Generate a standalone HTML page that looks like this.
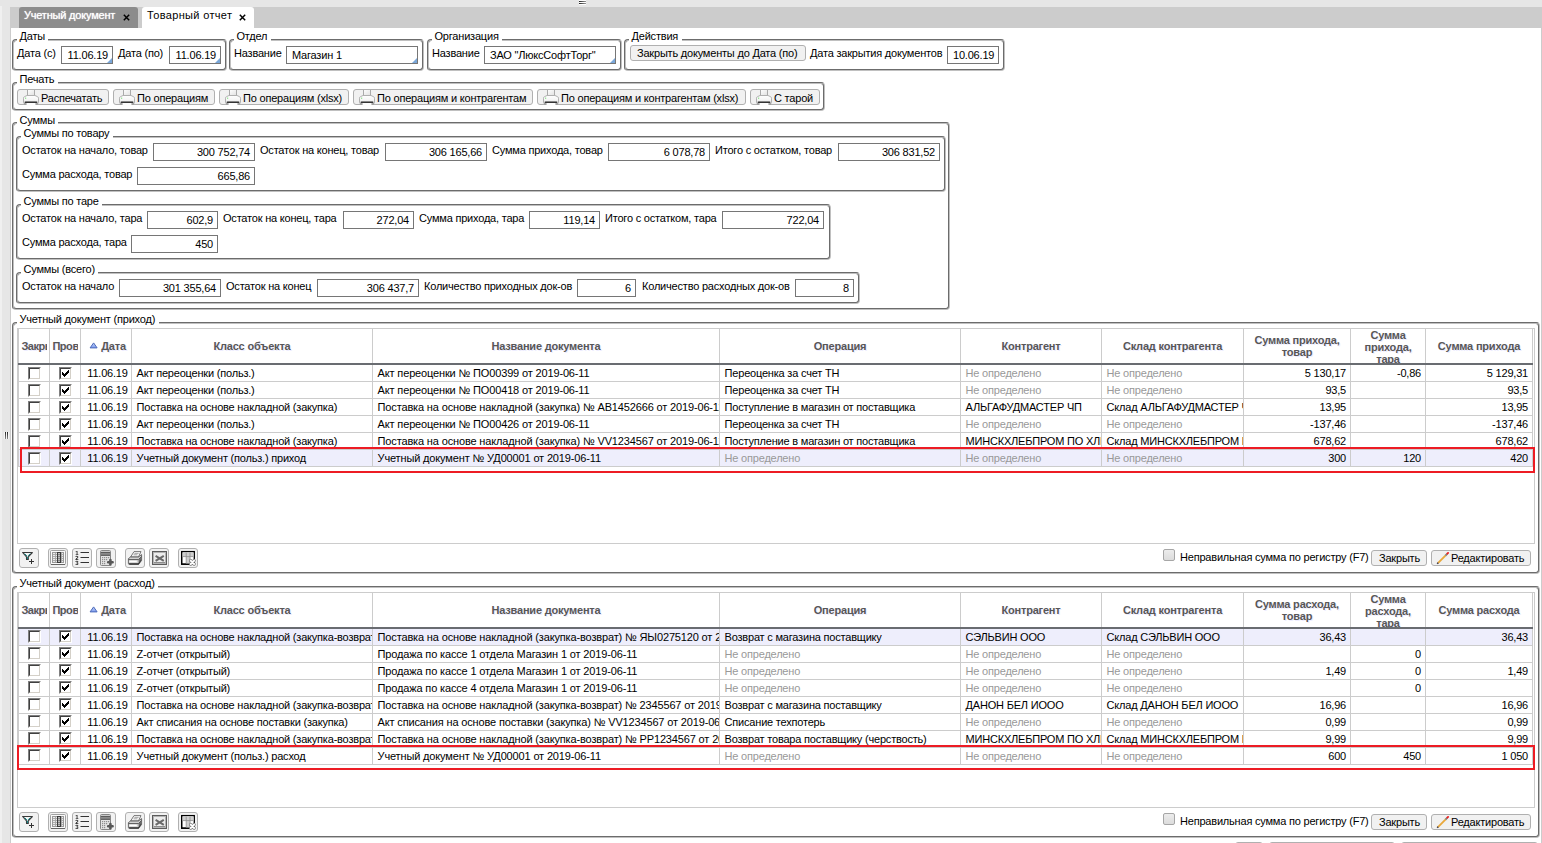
<!DOCTYPE html><html lang="ru"><head><meta charset="utf-8"><title>Товарный отчет</title><style>
*{box-sizing:border-box;margin:0;padding:0}
html,body{width:1542px;height:843px;overflow:hidden}
body{position:relative;background:#e6e6e6;font:11px/13px "Liberation Sans",sans-serif;color:#000;letter-spacing:-0.2px}
div,span,svg{position:absolute}
.t{white-space:nowrap;height:13px;line-height:13px}
.fs{border:2px groove #c0c0c0;border-radius:4px}
.lg{background:#fff;padding:0 3.5px 0 2.5px;height:13px;line-height:13px;white-space:nowrap}
.in{border:1px solid #767676;background:#fff;height:18px;line-height:17px;white-space:nowrap;overflow:hidden;padding:0 4px 0 5px}
.in.r{text-align:right}
.tri{width:0;height:0;border-left:5px solid transparent;border-bottom:5px solid #7aa7d9;right:0;bottom:0}
.btn{border:1px solid #b0b0b0;border-radius:3px;background:#f1f1f1;height:16px;line-height:14px;white-space:nowrap}
.tb{border:1px solid #b0b0b0;border-radius:3px;background:#f2f2f2;width:20px;height:20px;overflow:hidden}
.grid{border:1px solid #ccc;background:#fff;overflow:hidden}
.hc{top:0;height:34px;border-left:1px solid #ccc;font-weight:bold;color:#585757;text-shadow:1px 1px 0 #ededff;letter-spacing:-0.2px;overflow:hidden;display:flex;align-items:center;justify-content:center;text-align:center;line-height:12px;padding:0 3px}
.hc>span{position:static}
.hl{left:0;top:34px;height:2px;background:#696c71}
.row{left:0;height:17px;border-bottom:1px solid #ccc}
.row.sel{background:#eeeefc}
.c{top:0;height:16px;line-height:16px;border-left:1px solid #ccc;white-space:nowrap;overflow:hidden;padding:0 4px 0 4.6px}
.c.r{text-align:right}
.c.n{color:#999}
.cb{width:13px;height:13px;top:2px;background:#fff;border:1px solid;border-color:#808080 #fff #fff #808080}
.cb:before{box-sizing:border-box;content:"";position:absolute;left:0;top:0;width:11px;height:11px;border:1px solid;border-color:#404040 #d4d0c8 #d4d0c8 #404040}
.red{border:2px solid #ed1c24}
</style></head><body>
<div style="left:0;top:6px;width:2px;height:837px;background:#f0f0f0"></div>
<div style="left:10px;top:7px;width:1532px;height:21px;background:#ccc"></div>
<div style="left:10px;top:28px;width:1532px;height:815px;background:#ccc"></div>
<div style="left:11px;top:28px;width:1530px;height:815px;background:#fff"></div>
<div style="left:579px;top:0;width:7px;height:5px;background:#fff"></div>
<div style="left:579px;top:1px;width:7px;height:1px;background:linear-gradient(90deg,#222,#999)"></div>
<div style="left:579px;top:3px;width:7px;height:1px;background:linear-gradient(90deg,#222,#999)"></div>
<div style="left:4px;top:432px;width:5px;height:7px;background:#f6f6f6"></div>
<div style="left:5px;top:432px;width:1px;height:7px;background:linear-gradient(#222,#888)"></div>
<div style="left:7px;top:432px;width:1px;height:7px;background:linear-gradient(#222,#888)"></div>
<div style="left:19px;top:7px;width:119px;height:21px;background:#8c8c8c;border-radius:3px 3px 0 0"></div>
<span class="t " style="left:24px;top:9px;color:#fff;text-shadow:0 0 1px #fff;font-size:11px">Учетный документ</span>
<div style="left:142px;top:7px;width:112px;height:21px;background:#fff;border-radius:3px 3px 0 0"></div>
<span class="t " style="left:147px;top:9px;letter-spacing:.34px">Товарный отчет</span>
<svg width="7" height="7" viewBox="0 0 7 7" style="left:123px;top:14px"><path d="M.8 .8 L6.2 6.2 M6.2 .8 L.8 6.2" stroke="#000" stroke-width="1.45" fill="none"/></svg>
<svg width="7" height="7" viewBox="0 0 7 7" style="left:239px;top:14px"><path d="M.8 .8 L6.2 6.2 M6.2 .8 L.8 6.2" stroke="#000" stroke-width="1.45" fill="none"/></svg>
<div class="fs" style="left:12px;top:39px;width:215px;height:32px"></div>
<span class="lg" style="left:17px;top:30px">Даты</span>
<span class="t " style="left:17px;top:47px;">Дата (с)</span>
<div class="in r" style="left:61px;top:46px;width:52px">11.06.19<div class="tri"></div></div>
<span class="t " style="left:118px;top:47px;">Дата (по)</span>
<div class="in r" style="left:169px;top:46px;width:52px">11.06.19<div class="tri"></div></div>
<div class="fs" style="left:229px;top:39px;width:195px;height:32px"></div>
<span class="lg" style="left:234px;top:30px">Отдел</span>
<span class="t " style="left:234px;top:47px;">Название</span>
<div class="in" style="left:286px;top:46px;width:132px">Магазин 1<div class="tri"></div></div>
<div class="fs" style="left:427px;top:39px;width:195px;height:32px"></div>
<span class="lg" style="left:432px;top:30px">Организация</span>
<span class="t " style="left:432px;top:47px;">Название</span>
<div class="in" style="left:484px;top:46px;width:132px">ЗАО "ЛюксСофтТорг"<div class="tri"></div></div>
<div class="fs" style="left:624px;top:39px;width:381px;height:32px"></div>
<span class="lg" style="left:629px;top:30px">Действия</span>
<div class="btn" style="left:630px;top:45px;width:176px;height:16px"><span class="t" style="left:6px;top:1px">Закрыть документы до Дата (по)</span></div>
<span class="t " style="left:810px;top:47px;">Дата закрытия документов</span>
<div class="in r" style="left:947px;top:46px;width:52px">10.06.19</div>
<div class="fs" style="left:12px;top:82px;width:813px;height:29px"></div>
<span class="lg" style="left:17px;top:73px">Печать</span>
<div class="btn" style="left:17px;top:89px;width:92px;height:16px"><svg width="16" height="17" viewBox="0 0 16 17" style="left:5px;top:-1px"><defs><linearGradient id="pg1" x1="0" y1="0" x2="0" y2="1"><stop offset="0" stop-color="#fff"/><stop offset=".6" stop-color="#f4f4f4"/><stop offset="1" stop-color="#dcdcdc"/></linearGradient><linearGradient id="pb1" x1="0" y1="0" x2="0" y2="1"><stop offset="0" stop-color="#b0b0b0"/><stop offset="1" stop-color="#0c0c0c"/></linearGradient><linearGradient id="pp1" x1="0" y1="0" x2="1" y2="1"><stop offset="0" stop-color="#fff"/><stop offset="1" stop-color="#dedede"/></linearGradient></defs><rect x="4" y="1" width="8" height="6" fill="url(#pp1)"/><path d="M4.5 1 V6.5 M11.5 1 V6.5" stroke="#aaa" fill="none"/><path d="M.5 13.5 V9.2 Q.5 8 1.6 7.6 L4 6.5 H12 L14.4 7.6 Q15.5 8 15.5 9.2 V13.5 Q15.5 14.5 14.5 14.5 H1.5 Q.5 14.5 .5 13.5Z" fill="url(#pg1)" stroke="#b0b0b0"/><path d="M2.6 12 H13.4 Q14.3 12 14.3 13 V14 H1.7 V13 Q1.7 12 2.6 12Z" fill="url(#pb1)"/><rect x="1" y="14" width="2.6" height="2" fill="#a2a2a2"/><rect x="12.4" y="14" width="2.6" height="2" fill="#a2a2a2"/><rect x="3.6" y="14" width="8.8" height="2.6" fill="#fdfdfd"/><rect x="2" y="8.6" width="1.2" height="1.2" fill="#86e086"/></svg><span class="t" style="left:23px;top:2px">Распечатать</span></div>
<div class="btn" style="left:113px;top:89px;width:102px;height:16px"><svg width="16" height="17" viewBox="0 0 16 17" style="left:5px;top:-1px"><defs><linearGradient id="pg2" x1="0" y1="0" x2="0" y2="1"><stop offset="0" stop-color="#fff"/><stop offset=".6" stop-color="#f4f4f4"/><stop offset="1" stop-color="#dcdcdc"/></linearGradient><linearGradient id="pb2" x1="0" y1="0" x2="0" y2="1"><stop offset="0" stop-color="#b0b0b0"/><stop offset="1" stop-color="#0c0c0c"/></linearGradient><linearGradient id="pp2" x1="0" y1="0" x2="1" y2="1"><stop offset="0" stop-color="#fff"/><stop offset="1" stop-color="#dedede"/></linearGradient></defs><rect x="4" y="1" width="8" height="6" fill="url(#pp2)"/><path d="M4.5 1 V6.5 M11.5 1 V6.5" stroke="#aaa" fill="none"/><path d="M.5 13.5 V9.2 Q.5 8 1.6 7.6 L4 6.5 H12 L14.4 7.6 Q15.5 8 15.5 9.2 V13.5 Q15.5 14.5 14.5 14.5 H1.5 Q.5 14.5 .5 13.5Z" fill="url(#pg2)" stroke="#b0b0b0"/><path d="M2.6 12 H13.4 Q14.3 12 14.3 13 V14 H1.7 V13 Q1.7 12 2.6 12Z" fill="url(#pb2)"/><rect x="1" y="14" width="2.6" height="2" fill="#a2a2a2"/><rect x="12.4" y="14" width="2.6" height="2" fill="#a2a2a2"/><rect x="3.6" y="14" width="8.8" height="2.6" fill="#fdfdfd"/><rect x="2" y="8.6" width="1.2" height="1.2" fill="#86e086"/></svg><span class="t" style="left:23px;top:2px">По операциям</span></div>
<div class="btn" style="left:219px;top:89px;width:130px;height:16px"><svg width="16" height="17" viewBox="0 0 16 17" style="left:5px;top:-1px"><defs><linearGradient id="pg3" x1="0" y1="0" x2="0" y2="1"><stop offset="0" stop-color="#fff"/><stop offset=".6" stop-color="#f4f4f4"/><stop offset="1" stop-color="#dcdcdc"/></linearGradient><linearGradient id="pb3" x1="0" y1="0" x2="0" y2="1"><stop offset="0" stop-color="#b0b0b0"/><stop offset="1" stop-color="#0c0c0c"/></linearGradient><linearGradient id="pp3" x1="0" y1="0" x2="1" y2="1"><stop offset="0" stop-color="#fff"/><stop offset="1" stop-color="#dedede"/></linearGradient></defs><rect x="4" y="1" width="8" height="6" fill="url(#pp3)"/><path d="M4.5 1 V6.5 M11.5 1 V6.5" stroke="#aaa" fill="none"/><path d="M.5 13.5 V9.2 Q.5 8 1.6 7.6 L4 6.5 H12 L14.4 7.6 Q15.5 8 15.5 9.2 V13.5 Q15.5 14.5 14.5 14.5 H1.5 Q.5 14.5 .5 13.5Z" fill="url(#pg3)" stroke="#b0b0b0"/><path d="M2.6 12 H13.4 Q14.3 12 14.3 13 V14 H1.7 V13 Q1.7 12 2.6 12Z" fill="url(#pb3)"/><rect x="1" y="14" width="2.6" height="2" fill="#a2a2a2"/><rect x="12.4" y="14" width="2.6" height="2" fill="#a2a2a2"/><rect x="3.6" y="14" width="8.8" height="2.6" fill="#fdfdfd"/><rect x="2" y="8.6" width="1.2" height="1.2" fill="#86e086"/></svg><span class="t" style="left:23px;top:2px">По операциям (xlsx)</span></div>
<div class="btn" style="left:353px;top:89px;width:180px;height:16px"><svg width="16" height="17" viewBox="0 0 16 17" style="left:5px;top:-1px"><defs><linearGradient id="pg4" x1="0" y1="0" x2="0" y2="1"><stop offset="0" stop-color="#fff"/><stop offset=".6" stop-color="#f4f4f4"/><stop offset="1" stop-color="#dcdcdc"/></linearGradient><linearGradient id="pb4" x1="0" y1="0" x2="0" y2="1"><stop offset="0" stop-color="#b0b0b0"/><stop offset="1" stop-color="#0c0c0c"/></linearGradient><linearGradient id="pp4" x1="0" y1="0" x2="1" y2="1"><stop offset="0" stop-color="#fff"/><stop offset="1" stop-color="#dedede"/></linearGradient></defs><rect x="4" y="1" width="8" height="6" fill="url(#pp4)"/><path d="M4.5 1 V6.5 M11.5 1 V6.5" stroke="#aaa" fill="none"/><path d="M.5 13.5 V9.2 Q.5 8 1.6 7.6 L4 6.5 H12 L14.4 7.6 Q15.5 8 15.5 9.2 V13.5 Q15.5 14.5 14.5 14.5 H1.5 Q.5 14.5 .5 13.5Z" fill="url(#pg4)" stroke="#b0b0b0"/><path d="M2.6 12 H13.4 Q14.3 12 14.3 13 V14 H1.7 V13 Q1.7 12 2.6 12Z" fill="url(#pb4)"/><rect x="1" y="14" width="2.6" height="2" fill="#a2a2a2"/><rect x="12.4" y="14" width="2.6" height="2" fill="#a2a2a2"/><rect x="3.6" y="14" width="8.8" height="2.6" fill="#fdfdfd"/><rect x="2" y="8.6" width="1.2" height="1.2" fill="#86e086"/></svg><span class="t" style="left:23px;top:2px">По операциям и контрагентам</span></div>
<div class="btn" style="left:537px;top:89px;width:209px;height:16px"><svg width="16" height="17" viewBox="0 0 16 17" style="left:5px;top:-1px"><defs><linearGradient id="pg5" x1="0" y1="0" x2="0" y2="1"><stop offset="0" stop-color="#fff"/><stop offset=".6" stop-color="#f4f4f4"/><stop offset="1" stop-color="#dcdcdc"/></linearGradient><linearGradient id="pb5" x1="0" y1="0" x2="0" y2="1"><stop offset="0" stop-color="#b0b0b0"/><stop offset="1" stop-color="#0c0c0c"/></linearGradient><linearGradient id="pp5" x1="0" y1="0" x2="1" y2="1"><stop offset="0" stop-color="#fff"/><stop offset="1" stop-color="#dedede"/></linearGradient></defs><rect x="4" y="1" width="8" height="6" fill="url(#pp5)"/><path d="M4.5 1 V6.5 M11.5 1 V6.5" stroke="#aaa" fill="none"/><path d="M.5 13.5 V9.2 Q.5 8 1.6 7.6 L4 6.5 H12 L14.4 7.6 Q15.5 8 15.5 9.2 V13.5 Q15.5 14.5 14.5 14.5 H1.5 Q.5 14.5 .5 13.5Z" fill="url(#pg5)" stroke="#b0b0b0"/><path d="M2.6 12 H13.4 Q14.3 12 14.3 13 V14 H1.7 V13 Q1.7 12 2.6 12Z" fill="url(#pb5)"/><rect x="1" y="14" width="2.6" height="2" fill="#a2a2a2"/><rect x="12.4" y="14" width="2.6" height="2" fill="#a2a2a2"/><rect x="3.6" y="14" width="8.8" height="2.6" fill="#fdfdfd"/><rect x="2" y="8.6" width="1.2" height="1.2" fill="#86e086"/></svg><span class="t" style="left:23px;top:2px">По операциям и контрагентам (xlsx)</span></div>
<div class="btn" style="left:750px;top:89px;width:70px;height:16px"><svg width="16" height="17" viewBox="0 0 16 17" style="left:5px;top:-1px"><defs><linearGradient id="pg6" x1="0" y1="0" x2="0" y2="1"><stop offset="0" stop-color="#fff"/><stop offset=".6" stop-color="#f4f4f4"/><stop offset="1" stop-color="#dcdcdc"/></linearGradient><linearGradient id="pb6" x1="0" y1="0" x2="0" y2="1"><stop offset="0" stop-color="#b0b0b0"/><stop offset="1" stop-color="#0c0c0c"/></linearGradient><linearGradient id="pp6" x1="0" y1="0" x2="1" y2="1"><stop offset="0" stop-color="#fff"/><stop offset="1" stop-color="#dedede"/></linearGradient></defs><rect x="4" y="1" width="8" height="6" fill="url(#pp6)"/><path d="M4.5 1 V6.5 M11.5 1 V6.5" stroke="#aaa" fill="none"/><path d="M.5 13.5 V9.2 Q.5 8 1.6 7.6 L4 6.5 H12 L14.4 7.6 Q15.5 8 15.5 9.2 V13.5 Q15.5 14.5 14.5 14.5 H1.5 Q.5 14.5 .5 13.5Z" fill="url(#pg6)" stroke="#b0b0b0"/><path d="M2.6 12 H13.4 Q14.3 12 14.3 13 V14 H1.7 V13 Q1.7 12 2.6 12Z" fill="url(#pb6)"/><rect x="1" y="14" width="2.6" height="2" fill="#a2a2a2"/><rect x="12.4" y="14" width="2.6" height="2" fill="#a2a2a2"/><rect x="3.6" y="14" width="8.8" height="2.6" fill="#fdfdfd"/><rect x="2" y="8.6" width="1.2" height="1.2" fill="#86e086"/></svg><span class="t" style="left:23px;top:2px">С тарой</span></div>
<div class="fs" style="left:12px;top:122px;width:938px;height:188px"></div>
<span class="lg" style="left:17px;top:114px">Суммы</span>
<div class="fs" style="left:16px;top:136px;width:930px;height:56px"></div>
<span class="lg" style="left:21px;top:127px">Суммы по товару</span>
<span class="t " style="left:22px;top:144px;">Остаток на начало, товар</span>
<div class="in r" style="left:153px;top:143px;width:102px">300 752,74</div>
<span class="t " style="left:260px;top:144px;">Остаток на конец, товар</span>
<div class="in r" style="left:385px;top:143px;width:102px">306 165,66</div>
<span class="t " style="left:492px;top:144px;">Сумма прихода, товар</span>
<div class="in r" style="left:608px;top:143px;width:102px">6 078,78</div>
<span class="t " style="left:715px;top:144px;">Итого с остатком, товар</span>
<div class="in r" style="left:838px;top:143px;width:102px">306 831,52</div>
<span class="t " style="left:22px;top:168px;">Сумма расхода, товар</span>
<div class="in r" style="left:137px;top:167px;width:118px">665,86</div>
<div class="fs" style="left:16px;top:204px;width:815px;height:56px"></div>
<span class="lg" style="left:21px;top:195px">Суммы по таре</span>
<span class="t " style="left:22px;top:212px;">Остаток на начало, тара</span>
<div class="in r" style="left:147px;top:211px;width:71px">602,9</div>
<span class="t " style="left:223px;top:212px;">Остаток на конец, тара</span>
<div class="in r" style="left:343px;top:211px;width:71px">272,04</div>
<span class="t " style="left:419px;top:212px;">Сумма прихода, тара</span>
<div class="in r" style="left:529px;top:211px;width:71px">119,14</div>
<span class="t " style="left:605px;top:212px;">Итого с остатком, тара</span>
<div class="in r" style="left:722px;top:211px;width:102px">722,04</div>
<span class="t " style="left:22px;top:236px;">Сумма расхода, тара</span>
<div class="in r" style="left:131px;top:235px;width:87px">450</div>
<div class="fs" style="left:16px;top:272px;width:844px;height:32px"></div>
<span class="lg" style="left:21px;top:263px">Суммы (всего)</span>
<span class="t " style="left:22px;top:280px;">Остаток на начало</span>
<div class="in r" style="left:119px;top:279px;width:102px">301 355,64</div>
<span class="t " style="left:226px;top:280px;">Остаток на конец</span>
<div class="in r" style="left:317px;top:279px;width:102px">306 437,7</div>
<span class="t " style="left:424px;top:280px;">Количество приходных док-ов</span>
<div class="in r" style="left:577px;top:279px;width:59px">6</div>
<span class="t " style="left:642px;top:280px;">Количество расходных док-ов</span>
<div class="in r" style="left:795px;top:279px;width:59px">8</div>
<div class="fs" style="left:12px;top:322px;width:1528px;height:252px"></div>
<span class="lg" style="left:17px;top:313px">Учетный документ (приход)</span>
<div class="grid" style="left:17px;top:328px;width:1518px;height:216px">
<div class="hc" style="left:0px;width:31px;justify-content:flex-start;padding:0 2px 0 2.4px;white-space:nowrap;letter-spacing:-0.45px;text-align:left;"><span style="display:block;overflow:hidden;width:25.6px;flex:none">Закрыт</span></div>
<div class="hc" style="left:31px;width:31px;justify-content:flex-start;padding:0 2px 0 2.4px;white-space:nowrap;letter-spacing:-0.45px;text-align:left;"><span style="display:block;overflow:hidden;width:25.6px;flex:none">Проведен</span></div>
<div class="hc" style="left:62px;width:51px;padding:0 0 0 3px;"><svg width="9" height="7" viewBox="0 0 9 7" style="position:static;flex:none;margin:0 3px 2px 0"><defs><linearGradient id="tg0" x1="0" y1="0" x2="0" y2="1"><stop offset="0" stop-color="#c4d2f8"/><stop offset="1" stop-color="#7c9cf0"/></linearGradient></defs><path d="M4.6 .9 L8.1 5.9 H1.1Z" fill="url(#tg0)" stroke="#4a68b8" stroke-width="1" stroke-linejoin="round"/></svg><span>Дата</span></div>
<div class="hc" style="left:113px;width:241px;"><span>Класс объекта</span></div>
<div class="hc" style="left:354px;width:347px;"><span>Название документа</span></div>
<div class="hc" style="left:701px;width:241px;"><span>Операция</span></div>
<div class="hc" style="left:942px;width:141px;"><span>Контрагент</span></div>
<div class="hc" style="left:1083px;width:142px;"><span>Склад контрагента</span></div>
<div class="hc" style="left:1225px;width:107px;"><span>Сумма прихода, товар</span></div>
<div class="hc" style="left:1332px;width:75px;padding-top:2px;"><span>Сумма прихода, тара</span></div>
<div class="hc" style="left:1407px;width:108px;border-right:1px solid #ccc;"><span>Сумма прихода</span></div>
<div class="hl" style="width:1515px"></div>
<div class="row" style="top:36px;width:1515px">
<div class="c" style="left:0px;width:31px;padding:0;"><div class="cb" style="left:9px;top:2px"></div></div>
<div class="c" style="left:31px;width:31px;padding:0;"><div class="cb" style="left:9px;top:2px"><svg width="7" height="7" viewBox="0 0 7 7" shape-rendering="crispEdges" style="left:2px;top:2px"><path d="M0 2v3h1v1h1v1h1v-1h1v-1h1v-1h1v-1h1v-3h-1v1h-1v1h-1v1h-1v1h-1v-1h-1v-1h-1z" fill="#000"/></svg></div></div>
<div class="c r" style="left:62px;width:51px;padding-right:3.3px;">11.06.19</div>
<div class="c" style="left:113px;width:241px;">Акт переоценки (польз.)</div>
<div class="c" style="left:354px;width:347px;letter-spacing:-0.15px;">Акт переоценки № ПО00399 от 2019-06-11</div>
<div class="c" style="left:701px;width:241px;">Переоценка за счет ТН</div>
<div class="c n" style="left:942px;width:141px;">Не определено</div>
<div class="c n" style="left:1083px;width:142px;">Не определено</div>
<div class="c r" style="left:1225px;width:107px;">5 130,17</div>
<div class="c r" style="left:1332px;width:75px;">-0,86</div>
<div class="c r" style="left:1407px;width:108px;border-right:1px solid #ccc;">5 129,31</div>
</div>
<div class="row" style="top:53px;width:1515px">
<div class="c" style="left:0px;width:31px;padding:0;"><div class="cb" style="left:9px;top:2px"></div></div>
<div class="c" style="left:31px;width:31px;padding:0;"><div class="cb" style="left:9px;top:2px"><svg width="7" height="7" viewBox="0 0 7 7" shape-rendering="crispEdges" style="left:2px;top:2px"><path d="M0 2v3h1v1h1v1h1v-1h1v-1h1v-1h1v-1h1v-3h-1v1h-1v1h-1v1h-1v1h-1v-1h-1v-1h-1z" fill="#000"/></svg></div></div>
<div class="c r" style="left:62px;width:51px;padding-right:3.3px;">11.06.19</div>
<div class="c" style="left:113px;width:241px;">Акт переоценки (польз.)</div>
<div class="c" style="left:354px;width:347px;letter-spacing:-0.15px;">Акт переоценки № ПО00418 от 2019-06-11</div>
<div class="c" style="left:701px;width:241px;">Переоценка за счет ТН</div>
<div class="c n" style="left:942px;width:141px;">Не определено</div>
<div class="c n" style="left:1083px;width:142px;">Не определено</div>
<div class="c r" style="left:1225px;width:107px;">93,5</div>
<div class="c r" style="left:1332px;width:75px;"></div>
<div class="c r" style="left:1407px;width:108px;border-right:1px solid #ccc;">93,5</div>
</div>
<div class="row" style="top:70px;width:1515px">
<div class="c" style="left:0px;width:31px;padding:0;"><div class="cb" style="left:9px;top:2px"></div></div>
<div class="c" style="left:31px;width:31px;padding:0;"><div class="cb" style="left:9px;top:2px"><svg width="7" height="7" viewBox="0 0 7 7" shape-rendering="crispEdges" style="left:2px;top:2px"><path d="M0 2v3h1v1h1v1h1v-1h1v-1h1v-1h1v-1h1v-3h-1v1h-1v1h-1v1h-1v1h-1v-1h-1v-1h-1z" fill="#000"/></svg></div></div>
<div class="c r" style="left:62px;width:51px;padding-right:3.3px;">11.06.19</div>
<div class="c" style="left:113px;width:241px;">Поставка на основе накладной (закупка)</div>
<div class="c" style="left:354px;width:347px;letter-spacing:-0.15px;">Поставка на основе накладной (закупка) № АВ1452666 от 2019-06-11</div>
<div class="c" style="left:701px;width:241px;">Поступление в магазин от поставщика</div>
<div class="c" style="left:942px;width:141px;">АЛЬГАФУДМАСТЕР ЧП</div>
<div class="c" style="left:1083px;width:142px;">Склад АЛЬГАФУДМАСТЕР ЧП</div>
<div class="c r" style="left:1225px;width:107px;">13,95</div>
<div class="c r" style="left:1332px;width:75px;"></div>
<div class="c r" style="left:1407px;width:108px;border-right:1px solid #ccc;">13,95</div>
</div>
<div class="row" style="top:87px;width:1515px">
<div class="c" style="left:0px;width:31px;padding:0;"><div class="cb" style="left:9px;top:2px"></div></div>
<div class="c" style="left:31px;width:31px;padding:0;"><div class="cb" style="left:9px;top:2px"><svg width="7" height="7" viewBox="0 0 7 7" shape-rendering="crispEdges" style="left:2px;top:2px"><path d="M0 2v3h1v1h1v1h1v-1h1v-1h1v-1h1v-1h1v-3h-1v1h-1v1h-1v1h-1v1h-1v-1h-1v-1h-1z" fill="#000"/></svg></div></div>
<div class="c r" style="left:62px;width:51px;padding-right:3.3px;">11.06.19</div>
<div class="c" style="left:113px;width:241px;">Акт переоценки (польз.)</div>
<div class="c" style="left:354px;width:347px;letter-spacing:-0.15px;">Акт переоценки № ПО00426 от 2019-06-11</div>
<div class="c" style="left:701px;width:241px;">Переоценка за счет ТН</div>
<div class="c n" style="left:942px;width:141px;">Не определено</div>
<div class="c n" style="left:1083px;width:142px;">Не определено</div>
<div class="c r" style="left:1225px;width:107px;">-137,46</div>
<div class="c r" style="left:1332px;width:75px;"></div>
<div class="c r" style="left:1407px;width:108px;border-right:1px solid #ccc;">-137,46</div>
</div>
<div class="row" style="top:104px;width:1515px">
<div class="c" style="left:0px;width:31px;padding:0;"><div class="cb" style="left:9px;top:2px"></div></div>
<div class="c" style="left:31px;width:31px;padding:0;"><div class="cb" style="left:9px;top:2px"><svg width="7" height="7" viewBox="0 0 7 7" shape-rendering="crispEdges" style="left:2px;top:2px"><path d="M0 2v3h1v1h1v1h1v-1h1v-1h1v-1h1v-1h1v-3h-1v1h-1v1h-1v1h-1v1h-1v-1h-1v-1h-1z" fill="#000"/></svg></div></div>
<div class="c r" style="left:62px;width:51px;padding-right:3.3px;">11.06.19</div>
<div class="c" style="left:113px;width:241px;">Поставка на основе накладной (закупка)</div>
<div class="c" style="left:354px;width:347px;letter-spacing:-0.15px;">Поставка на основе накладной (закупка) № VV1234567 от 2019-06-11</div>
<div class="c" style="left:701px;width:241px;">Поступление в магазин от поставщика</div>
<div class="c" style="left:942px;width:141px;">МИНСКХЛЕБПРОМ ПО ХЛЕБОЗАВОД</div>
<div class="c" style="left:1083px;width:142px;">Склад МИНСКХЛЕБПРОМ ПО ХЛЕБОЗАВОД</div>
<div class="c r" style="left:1225px;width:107px;">678,62</div>
<div class="c r" style="left:1332px;width:75px;"></div>
<div class="c r" style="left:1407px;width:108px;border-right:1px solid #ccc;">678,62</div>
</div>
<div class="row sel" style="top:121px;width:1515px">
<div class="c" style="left:0px;width:31px;padding:0;"><div class="cb" style="left:9px;top:2px"></div></div>
<div class="c" style="left:31px;width:31px;padding:0;"><div class="cb" style="left:9px;top:2px"><svg width="7" height="7" viewBox="0 0 7 7" shape-rendering="crispEdges" style="left:2px;top:2px"><path d="M0 2v3h1v1h1v1h1v-1h1v-1h1v-1h1v-1h1v-3h-1v1h-1v1h-1v1h-1v1h-1v-1h-1v-1h-1z" fill="#000"/></svg></div></div>
<div class="c r" style="left:62px;width:51px;padding-right:3.3px;">11.06.19</div>
<div class="c" style="left:113px;width:241px;">Учетный документ (польз.) приход</div>
<div class="c" style="left:354px;width:347px;letter-spacing:-0.15px;">Учетный документ № УД00001 от 2019-06-11</div>
<div class="c n" style="left:701px;width:241px;">Не определено</div>
<div class="c n" style="left:942px;width:141px;">Не определено</div>
<div class="c n" style="left:1083px;width:142px;">Не определено</div>
<div class="c r" style="left:1225px;width:107px;">300</div>
<div class="c r" style="left:1332px;width:75px;">120</div>
<div class="c r" style="left:1407px;width:108px;border-right:1px solid #ccc;">420</div>
</div>
</div>
<div class="tb" style="left:19px;top:548px"><svg width="18" height="18" viewBox="0 0 18 18" style="left:0;top:0"><path d="M2.6 3.5 H12.4 L8.3 7.8 V10.4 H6.5 V7.8Z" fill="#f6f6f6" stroke="#3a3a3a" stroke-width="1.1" stroke-linejoin="round"/><path d="M4.6 4.6 L7.1 7.3 M10.2 4.7 L8.2 6.8 M7.4 8 V10" stroke="#0a8080" stroke-width="1" fill="none"/><path d="M11.5 10 V15 M9 12.5 H14" stroke="#333" stroke-width="1"/></svg></div>
<div class="tb" style="left:48px;top:548px"><svg width="18" height="18" viewBox="0 0 18 18" style="left:0;top:0"><rect x="1.5" y="1.5" width="15" height="14" rx="1" fill="#fafafa" stroke="#a0a0a0"/><path d="M2 15.5 H16" stroke="#666" stroke-width="1"/><rect x="3.5" y="3.5" width="11" height="10" fill="#ececec" stroke="#9a9a9a"/><path d="M6.5 4 V13 M12.5 4 V13 M4 5.5 H14 M4 7.5 H14 M4 9.5 H14 M4 11.5 H14" stroke="#a6a6a6" stroke-width=".9"/><rect x="8.5" y="3.5" width="3" height="10" fill="#bdbdbd" stroke="#3c3c3c"/><path d="M9 5.5 H11 M9 7.5 H11 M9 9.5 H11 M9 11.5 H11" stroke="#777" stroke-width=".8"/></svg></div>
<div class="tb" style="left:72px;top:548px"><svg width="18" height="18" viewBox="0 0 18 18" style="left:0;top:0;filter:grayscale(1)"><path d="M7.5 3.5 H16 M7.5 8.5 H16 M7.5 13.5 H16" stroke="#333" stroke-width="1"/><text x="2.2" y="6" transform="rotate(0.05 2 6)" font-family="Liberation Sans,sans-serif" font-size="6" font-weight="bold" fill="#222">1</text><text x="2.2" y="11" transform="rotate(0.05 2 11)" font-family="Liberation Sans,sans-serif" font-size="6" font-weight="bold" fill="#222">2</text><text x="2.2" y="16" transform="rotate(0.05 2 16)" font-family="Liberation Sans,sans-serif" font-size="6" font-weight="bold" fill="#222">3</text></svg></div>
<div class="tb" style="left:96px;top:548px"><svg width="18" height="18" viewBox="0 0 18 18" style="left:0;top:0"><rect x="3.5" y="1.5" width="10" height="15" rx="1" fill="#e4e4e4" stroke="#858585"/><rect x="4" y="3" width="9" height="3.6" fill="#8a8a8a"/><path d="M4 3.3 H13 M4 6.3 H13" stroke="#4a4a4a" stroke-width=".9"/><g fill="#8e8e8e"><rect x="5" y="8" width="1.2" height="1.2"/><rect x="7" y="8" width="1.2" height="1.2"/><rect x="9" y="8" width="1.2" height="1.2"/><rect x="11" y="8" width="1.2" height="1.2"/><rect x="5" y="10" width="1.2" height="1.2"/><rect x="7" y="10" width="1.2" height="1.2"/><rect x="9" y="10" width="1.2" height="1.2"/><rect x="5" y="12" width="1.2" height="1.2"/><rect x="7" y="12" width="1.2" height="1.2"/><rect x="5" y="14" width="1.2" height="1.2"/><rect x="7" y="14" width="1.2" height="1.2"/></g><path d="M13.4 11.1 V15.5 M11.2 13.3 H15.6" stroke="#585858" stroke-width="2.6" stroke-linecap="round"/></svg></div>
<div class="tb" style="left:125px;top:548px"><svg width="18" height="18" viewBox="0 0 18 18" style="left:0;top:0"><path d="M4.6 8 L8 2.6 H15 L12.4 8Z" fill="#f8f8f8" stroke="#6a6a6a" stroke-width=".9" stroke-linejoin="round"/><path d="M8.4 4.4 H12.6 M7.6 5.8 H11.4" stroke="#909090" stroke-width=".8"/><path d="M2.4 9.6 L4.6 8 H12.4 L15.6 5.6 V11.4 L12.6 15.4 H3.4 Q2.4 15.4 2.4 14.4Z" fill="#d2d2d2" stroke="#5a5a5a" stroke-width=".9" stroke-linejoin="round"/><path d="M2.6 10.6 H12.4 L15.4 7.6" stroke="#4a4a4a" stroke-width=".9" fill="none"/><path d="M12.6 10.8 L15.4 8 V11.2 L12.6 15Z" fill="#6a6a6a"/><rect x="3.4" y="11.6" width="7.4" height="1.6" fill="#fff"/><path d="M2.8 14.2 H12.4 L15.2 10.8 V11.6 L12.6 15.4 H3.4Z" fill="#2a2a2a"/></svg></div>
<div class="tb" style="left:149px;top:548px"><svg width="18" height="18" viewBox="0 0 18 18" style="left:0;top:0"><rect x="2.5" y="2.5" width="14" height="13" fill="#ededed" stroke="#5c5c5c" stroke-width="1"/><rect x="3.5" y="3.5" width="12" height="11" fill="none" stroke="#b4b4b4" stroke-width="1"/><path d="M5.6 6.9 L13.8 11.9 M13.8 6.9 L5.6 11.9" stroke="#6a6a6a" stroke-width="2"/><path d="M4 13.5 H15" stroke="#8c8c8c" stroke-width="1"/></svg></div>
<div class="tb" style="left:178px;top:548px"><svg width="18" height="18" viewBox="0 0 18 18" style="left:0;top:0"><rect x="2.7" y="2.6" width="12.6" height="12.6" fill="#fff" stroke="#000" stroke-width="1.3"/><path d="M2.6 2.2 V15.8 M2.2 15.2 H15.8" stroke="#000" stroke-width="1.2"/><rect x="3.6" y="3.6" width="10.8" height="4" fill="#cfcfcf"/><rect x="7.2" y="3.6" width="3.8" height="10.8" fill="#cfcfcf"/><path d="M7.2 3.6 V14.4 M11 3.6 V14.4 M3.6 7.6 H14.4" stroke="#8e8e8e" stroke-width=".8"/><path d="M11.7 11.6 L15.1 15 M15.1 11.6 L11.7 15" stroke="#7c7c7c" stroke-width="3.4" stroke-linecap="round"/><path d="M11.7 11.6 L15.1 15 M15.1 11.6 L11.7 15" stroke="#fff" stroke-width="1.9" stroke-linecap="round"/></svg></div>
<div style="left:1163px;top:549px;width:12px;height:12px;border:1px solid #a6a6a6;border-radius:2px;background:linear-gradient(#ececec,#dcdcdc)"></div>
<span class="t " style="left:1180px;top:551px;">Неправильная сумма по регистру (F7)</span>
<div class="btn" style="left:1371px;top:550px;width:56px;height:16px"><span class="t" style="left:7px;top:1px">Закрыть</span></div>
<div class="btn" style="left:1431px;top:550px;width:100px;height:16px"><svg width="16" height="16" viewBox="0 0 16 16" style="left:4px;top:0"><path d="M1.9 12.1 L9.9 4.1" stroke="#e9a83a" stroke-width="1.9" fill="none"/><path d="M9.5 4.5 L11.2 2.8" stroke="#7c8888" stroke-width="1.9" fill="none"/><path d="M11.3 2.7 L12.1 1.9" stroke="#ee1c1c" stroke-width="1.9" stroke-linecap="round" fill="none"/><path d="M1.2 12.8 L2.2 11.8" stroke="#33334a" stroke-width="1.6" fill="none"/></svg><span class="t" style="left:19px;top:1px">Редактировать</span></div>
<div class="red" style="left:20px;top:447px;width:1515px;height:26px"></div>
<div class="fs" style="left:12px;top:586px;width:1528px;height:252px"></div>
<span class="lg" style="left:17px;top:577px">Учетный документ (расход)</span>
<div class="grid" style="left:17px;top:592px;width:1518px;height:216px">
<div class="hc" style="left:0px;width:31px;justify-content:flex-start;padding:0 2px 0 2.4px;white-space:nowrap;letter-spacing:-0.45px;text-align:left;"><span style="display:block;overflow:hidden;width:25.6px;flex:none">Закрыт</span></div>
<div class="hc" style="left:31px;width:31px;justify-content:flex-start;padding:0 2px 0 2.4px;white-space:nowrap;letter-spacing:-0.45px;text-align:left;"><span style="display:block;overflow:hidden;width:25.6px;flex:none">Проведен</span></div>
<div class="hc" style="left:62px;width:51px;padding:0 0 0 3px;"><svg width="9" height="7" viewBox="0 0 9 7" style="position:static;flex:none;margin:0 3px 2px 0"><defs><linearGradient id="tg264" x1="0" y1="0" x2="0" y2="1"><stop offset="0" stop-color="#c4d2f8"/><stop offset="1" stop-color="#7c9cf0"/></linearGradient></defs><path d="M4.6 .9 L8.1 5.9 H1.1Z" fill="url(#tg264)" stroke="#4a68b8" stroke-width="1" stroke-linejoin="round"/></svg><span>Дата</span></div>
<div class="hc" style="left:113px;width:241px;"><span>Класс объекта</span></div>
<div class="hc" style="left:354px;width:347px;"><span>Название документа</span></div>
<div class="hc" style="left:701px;width:241px;"><span>Операция</span></div>
<div class="hc" style="left:942px;width:141px;"><span>Контрагент</span></div>
<div class="hc" style="left:1083px;width:142px;"><span>Склад контрагента</span></div>
<div class="hc" style="left:1225px;width:107px;"><span>Сумма расхода, товар</span></div>
<div class="hc" style="left:1332px;width:75px;padding-top:2px;"><span>Сумма расхода, тара</span></div>
<div class="hc" style="left:1407px;width:108px;border-right:1px solid #ccc;"><span>Сумма расхода</span></div>
<div class="hl" style="width:1515px"></div>
<div class="row sel" style="top:36px;width:1515px">
<div class="c" style="left:0px;width:31px;padding:0;"><div class="cb" style="left:9px;top:1px"></div></div>
<div class="c" style="left:31px;width:31px;padding:0;"><div class="cb" style="left:9px;top:1px"><svg width="7" height="7" viewBox="0 0 7 7" shape-rendering="crispEdges" style="left:2px;top:2px"><path d="M0 2v3h1v1h1v1h1v-1h1v-1h1v-1h1v-1h1v-3h-1v1h-1v1h-1v1h-1v1h-1v-1h-1v-1h-1z" fill="#000"/></svg></div></div>
<div class="c r" style="left:62px;width:51px;padding-right:3.3px;">11.06.19</div>
<div class="c" style="left:113px;width:241px;">Поставка на основе накладной (закупка-возврат)</div>
<div class="c" style="left:354px;width:347px;letter-spacing:-0.15px;">Поставка на основе накладной (закупка-возврат) № ЯЫ0275120 от 2019-06-11</div>
<div class="c" style="left:701px;width:241px;">Возврат с магазина поставщику</div>
<div class="c" style="left:942px;width:141px;">СЭЛЬВИН ООО</div>
<div class="c" style="left:1083px;width:142px;">Склад СЭЛЬВИН ООО</div>
<div class="c r" style="left:1225px;width:107px;">36,43</div>
<div class="c r" style="left:1332px;width:75px;"></div>
<div class="c r" style="left:1407px;width:108px;border-right:1px solid #ccc;">36,43</div>
</div>
<div class="row" style="top:53px;width:1515px">
<div class="c" style="left:0px;width:31px;padding:0;"><div class="cb" style="left:9px;top:1px"></div></div>
<div class="c" style="left:31px;width:31px;padding:0;"><div class="cb" style="left:9px;top:1px"><svg width="7" height="7" viewBox="0 0 7 7" shape-rendering="crispEdges" style="left:2px;top:2px"><path d="M0 2v3h1v1h1v1h1v-1h1v-1h1v-1h1v-1h1v-3h-1v1h-1v1h-1v1h-1v1h-1v-1h-1v-1h-1z" fill="#000"/></svg></div></div>
<div class="c r" style="left:62px;width:51px;padding-right:3.3px;">11.06.19</div>
<div class="c" style="left:113px;width:241px;">Z-отчет (открытый)</div>
<div class="c" style="left:354px;width:347px;letter-spacing:-0.15px;">Продажа по кассе 1 отдела Магазин 1 от 2019-06-11</div>
<div class="c n" style="left:701px;width:241px;">Не определено</div>
<div class="c n" style="left:942px;width:141px;">Не определено</div>
<div class="c n" style="left:1083px;width:142px;">Не определено</div>
<div class="c r" style="left:1225px;width:107px;"></div>
<div class="c r" style="left:1332px;width:75px;">0</div>
<div class="c r" style="left:1407px;width:108px;border-right:1px solid #ccc;"></div>
</div>
<div class="row" style="top:70px;width:1515px">
<div class="c" style="left:0px;width:31px;padding:0;"><div class="cb" style="left:9px;top:1px"></div></div>
<div class="c" style="left:31px;width:31px;padding:0;"><div class="cb" style="left:9px;top:1px"><svg width="7" height="7" viewBox="0 0 7 7" shape-rendering="crispEdges" style="left:2px;top:2px"><path d="M0 2v3h1v1h1v1h1v-1h1v-1h1v-1h1v-1h1v-3h-1v1h-1v1h-1v1h-1v1h-1v-1h-1v-1h-1z" fill="#000"/></svg></div></div>
<div class="c r" style="left:62px;width:51px;padding-right:3.3px;">11.06.19</div>
<div class="c" style="left:113px;width:241px;">Z-отчет (открытый)</div>
<div class="c" style="left:354px;width:347px;letter-spacing:-0.15px;">Продажа по кассе 1 отдела Магазин 1 от 2019-06-11</div>
<div class="c n" style="left:701px;width:241px;">Не определено</div>
<div class="c n" style="left:942px;width:141px;">Не определено</div>
<div class="c n" style="left:1083px;width:142px;">Не определено</div>
<div class="c r" style="left:1225px;width:107px;">1,49</div>
<div class="c r" style="left:1332px;width:75px;">0</div>
<div class="c r" style="left:1407px;width:108px;border-right:1px solid #ccc;">1,49</div>
</div>
<div class="row" style="top:87px;width:1515px">
<div class="c" style="left:0px;width:31px;padding:0;"><div class="cb" style="left:9px;top:1px"></div></div>
<div class="c" style="left:31px;width:31px;padding:0;"><div class="cb" style="left:9px;top:1px"><svg width="7" height="7" viewBox="0 0 7 7" shape-rendering="crispEdges" style="left:2px;top:2px"><path d="M0 2v3h1v1h1v1h1v-1h1v-1h1v-1h1v-1h1v-3h-1v1h-1v1h-1v1h-1v1h-1v-1h-1v-1h-1z" fill="#000"/></svg></div></div>
<div class="c r" style="left:62px;width:51px;padding-right:3.3px;">11.06.19</div>
<div class="c" style="left:113px;width:241px;">Z-отчет (открытый)</div>
<div class="c" style="left:354px;width:347px;letter-spacing:-0.15px;">Продажа по кассе 4 отдела Магазин 1 от 2019-06-11</div>
<div class="c n" style="left:701px;width:241px;">Не определено</div>
<div class="c n" style="left:942px;width:141px;">Не определено</div>
<div class="c n" style="left:1083px;width:142px;">Не определено</div>
<div class="c r" style="left:1225px;width:107px;"></div>
<div class="c r" style="left:1332px;width:75px;">0</div>
<div class="c r" style="left:1407px;width:108px;border-right:1px solid #ccc;"></div>
</div>
<div class="row" style="top:104px;width:1515px">
<div class="c" style="left:0px;width:31px;padding:0;"><div class="cb" style="left:9px;top:1px"></div></div>
<div class="c" style="left:31px;width:31px;padding:0;"><div class="cb" style="left:9px;top:1px"><svg width="7" height="7" viewBox="0 0 7 7" shape-rendering="crispEdges" style="left:2px;top:2px"><path d="M0 2v3h1v1h1v1h1v-1h1v-1h1v-1h1v-1h1v-3h-1v1h-1v1h-1v1h-1v1h-1v-1h-1v-1h-1z" fill="#000"/></svg></div></div>
<div class="c r" style="left:62px;width:51px;padding-right:3.3px;">11.06.19</div>
<div class="c" style="left:113px;width:241px;">Поставка на основе накладной (закупка-возврат)</div>
<div class="c" style="left:354px;width:347px;letter-spacing:-0.15px;">Поставка на основе накладной (закупка-возврат) № 2345567 от 2019-06-11</div>
<div class="c" style="left:701px;width:241px;">Возврат с магазина поставщику</div>
<div class="c" style="left:942px;width:141px;">ДАНОН БЕЛ ИООО</div>
<div class="c" style="left:1083px;width:142px;">Склад ДАНОН БЕЛ ИООО</div>
<div class="c r" style="left:1225px;width:107px;">16,96</div>
<div class="c r" style="left:1332px;width:75px;"></div>
<div class="c r" style="left:1407px;width:108px;border-right:1px solid #ccc;">16,96</div>
</div>
<div class="row" style="top:121px;width:1515px">
<div class="c" style="left:0px;width:31px;padding:0;"><div class="cb" style="left:9px;top:1px"></div></div>
<div class="c" style="left:31px;width:31px;padding:0;"><div class="cb" style="left:9px;top:1px"><svg width="7" height="7" viewBox="0 0 7 7" shape-rendering="crispEdges" style="left:2px;top:2px"><path d="M0 2v3h1v1h1v1h1v-1h1v-1h1v-1h1v-1h1v-3h-1v1h-1v1h-1v1h-1v1h-1v-1h-1v-1h-1z" fill="#000"/></svg></div></div>
<div class="c r" style="left:62px;width:51px;padding-right:3.3px;">11.06.19</div>
<div class="c" style="left:113px;width:241px;">Акт списания на основе поставки (закупка)</div>
<div class="c" style="left:354px;width:347px;letter-spacing:-0.15px;">Акт списания на основе поставки (закупка) № VV1234567 от 2019-06-11</div>
<div class="c" style="left:701px;width:241px;">Списание техпотерь</div>
<div class="c n" style="left:942px;width:141px;">Не определено</div>
<div class="c n" style="left:1083px;width:142px;">Не определено</div>
<div class="c r" style="left:1225px;width:107px;">0,99</div>
<div class="c r" style="left:1332px;width:75px;"></div>
<div class="c r" style="left:1407px;width:108px;border-right:1px solid #ccc;">0,99</div>
</div>
<div class="row" style="top:138px;width:1515px">
<div class="c" style="left:0px;width:31px;padding:0;"><div class="cb" style="left:9px;top:1px"></div></div>
<div class="c" style="left:31px;width:31px;padding:0;"><div class="cb" style="left:9px;top:1px"><svg width="7" height="7" viewBox="0 0 7 7" shape-rendering="crispEdges" style="left:2px;top:2px"><path d="M0 2v3h1v1h1v1h1v-1h1v-1h1v-1h1v-1h1v-3h-1v1h-1v1h-1v1h-1v1h-1v-1h-1v-1h-1z" fill="#000"/></svg></div></div>
<div class="c r" style="left:62px;width:51px;padding-right:3.3px;">11.06.19</div>
<div class="c" style="left:113px;width:241px;">Поставка на основе накладной (закупка-возврат)</div>
<div class="c" style="left:354px;width:347px;letter-spacing:-0.15px;">Поставка на основе накладной (закупка-возврат) № РР1234567 от 2019-06-11</div>
<div class="c" style="left:701px;width:241px;">Возврат товара поставщику (черствость)</div>
<div class="c" style="left:942px;width:141px;">МИНСКХЛЕБПРОМ ПО ХЛЕБОЗАВОД</div>
<div class="c" style="left:1083px;width:142px;">Склад МИНСКХЛЕБПРОМ ПО ХЛЕБОЗАВОД</div>
<div class="c r" style="left:1225px;width:107px;">9,99</div>
<div class="c r" style="left:1332px;width:75px;"></div>
<div class="c r" style="left:1407px;width:108px;border-right:1px solid #ccc;">9,99</div>
</div>
<div class="row" style="top:155px;width:1515px">
<div class="c" style="left:0px;width:31px;padding:0;"><div class="cb" style="left:9px;top:1px"></div></div>
<div class="c" style="left:31px;width:31px;padding:0;"><div class="cb" style="left:9px;top:1px"><svg width="7" height="7" viewBox="0 0 7 7" shape-rendering="crispEdges" style="left:2px;top:2px"><path d="M0 2v3h1v1h1v1h1v-1h1v-1h1v-1h1v-1h1v-3h-1v1h-1v1h-1v1h-1v1h-1v-1h-1v-1h-1z" fill="#000"/></svg></div></div>
<div class="c r" style="left:62px;width:51px;padding-right:3.3px;">11.06.19</div>
<div class="c" style="left:113px;width:241px;">Учетный документ (польз.) расход</div>
<div class="c" style="left:354px;width:347px;letter-spacing:-0.15px;">Учетный документ № УД00001 от 2019-06-11</div>
<div class="c n" style="left:701px;width:241px;">Не определено</div>
<div class="c n" style="left:942px;width:141px;">Не определено</div>
<div class="c n" style="left:1083px;width:142px;">Не определено</div>
<div class="c r" style="left:1225px;width:107px;">600</div>
<div class="c r" style="left:1332px;width:75px;">450</div>
<div class="c r" style="left:1407px;width:108px;border-right:1px solid #ccc;">1 050</div>
</div>
</div>
<div class="tb" style="left:19px;top:812px"><svg width="18" height="18" viewBox="0 0 18 18" style="left:0;top:0"><path d="M2.6 3.5 H12.4 L8.3 7.8 V10.4 H6.5 V7.8Z" fill="#f6f6f6" stroke="#3a3a3a" stroke-width="1.1" stroke-linejoin="round"/><path d="M4.6 4.6 L7.1 7.3 M10.2 4.7 L8.2 6.8 M7.4 8 V10" stroke="#0a8080" stroke-width="1" fill="none"/><path d="M11.5 10 V15 M9 12.5 H14" stroke="#333" stroke-width="1"/></svg></div>
<div class="tb" style="left:48px;top:812px"><svg width="18" height="18" viewBox="0 0 18 18" style="left:0;top:0"><rect x="1.5" y="1.5" width="15" height="14" rx="1" fill="#fafafa" stroke="#a0a0a0"/><path d="M2 15.5 H16" stroke="#666" stroke-width="1"/><rect x="3.5" y="3.5" width="11" height="10" fill="#ececec" stroke="#9a9a9a"/><path d="M6.5 4 V13 M12.5 4 V13 M4 5.5 H14 M4 7.5 H14 M4 9.5 H14 M4 11.5 H14" stroke="#a6a6a6" stroke-width=".9"/><rect x="8.5" y="3.5" width="3" height="10" fill="#bdbdbd" stroke="#3c3c3c"/><path d="M9 5.5 H11 M9 7.5 H11 M9 9.5 H11 M9 11.5 H11" stroke="#777" stroke-width=".8"/></svg></div>
<div class="tb" style="left:72px;top:812px"><svg width="18" height="18" viewBox="0 0 18 18" style="left:0;top:0;filter:grayscale(1)"><path d="M7.5 3.5 H16 M7.5 8.5 H16 M7.5 13.5 H16" stroke="#333" stroke-width="1"/><text x="2.2" y="6" transform="rotate(0.05 2 6)" font-family="Liberation Sans,sans-serif" font-size="6" font-weight="bold" fill="#222">1</text><text x="2.2" y="11" transform="rotate(0.05 2 11)" font-family="Liberation Sans,sans-serif" font-size="6" font-weight="bold" fill="#222">2</text><text x="2.2" y="16" transform="rotate(0.05 2 16)" font-family="Liberation Sans,sans-serif" font-size="6" font-weight="bold" fill="#222">3</text></svg></div>
<div class="tb" style="left:96px;top:812px"><svg width="18" height="18" viewBox="0 0 18 18" style="left:0;top:0"><rect x="3.5" y="1.5" width="10" height="15" rx="1" fill="#e4e4e4" stroke="#858585"/><rect x="4" y="3" width="9" height="3.6" fill="#8a8a8a"/><path d="M4 3.3 H13 M4 6.3 H13" stroke="#4a4a4a" stroke-width=".9"/><g fill="#8e8e8e"><rect x="5" y="8" width="1.2" height="1.2"/><rect x="7" y="8" width="1.2" height="1.2"/><rect x="9" y="8" width="1.2" height="1.2"/><rect x="11" y="8" width="1.2" height="1.2"/><rect x="5" y="10" width="1.2" height="1.2"/><rect x="7" y="10" width="1.2" height="1.2"/><rect x="9" y="10" width="1.2" height="1.2"/><rect x="5" y="12" width="1.2" height="1.2"/><rect x="7" y="12" width="1.2" height="1.2"/><rect x="5" y="14" width="1.2" height="1.2"/><rect x="7" y="14" width="1.2" height="1.2"/></g><path d="M13.4 11.1 V15.5 M11.2 13.3 H15.6" stroke="#585858" stroke-width="2.6" stroke-linecap="round"/></svg></div>
<div class="tb" style="left:125px;top:812px"><svg width="18" height="18" viewBox="0 0 18 18" style="left:0;top:0"><path d="M4.6 8 L8 2.6 H15 L12.4 8Z" fill="#f8f8f8" stroke="#6a6a6a" stroke-width=".9" stroke-linejoin="round"/><path d="M8.4 4.4 H12.6 M7.6 5.8 H11.4" stroke="#909090" stroke-width=".8"/><path d="M2.4 9.6 L4.6 8 H12.4 L15.6 5.6 V11.4 L12.6 15.4 H3.4 Q2.4 15.4 2.4 14.4Z" fill="#d2d2d2" stroke="#5a5a5a" stroke-width=".9" stroke-linejoin="round"/><path d="M2.6 10.6 H12.4 L15.4 7.6" stroke="#4a4a4a" stroke-width=".9" fill="none"/><path d="M12.6 10.8 L15.4 8 V11.2 L12.6 15Z" fill="#6a6a6a"/><rect x="3.4" y="11.6" width="7.4" height="1.6" fill="#fff"/><path d="M2.8 14.2 H12.4 L15.2 10.8 V11.6 L12.6 15.4 H3.4Z" fill="#2a2a2a"/></svg></div>
<div class="tb" style="left:149px;top:812px"><svg width="18" height="18" viewBox="0 0 18 18" style="left:0;top:0"><rect x="2.5" y="2.5" width="14" height="13" fill="#ededed" stroke="#5c5c5c" stroke-width="1"/><rect x="3.5" y="3.5" width="12" height="11" fill="none" stroke="#b4b4b4" stroke-width="1"/><path d="M5.6 6.9 L13.8 11.9 M13.8 6.9 L5.6 11.9" stroke="#6a6a6a" stroke-width="2"/><path d="M4 13.5 H15" stroke="#8c8c8c" stroke-width="1"/></svg></div>
<div class="tb" style="left:178px;top:812px"><svg width="18" height="18" viewBox="0 0 18 18" style="left:0;top:0"><rect x="2.7" y="2.6" width="12.6" height="12.6" fill="#fff" stroke="#000" stroke-width="1.3"/><path d="M2.6 2.2 V15.8 M2.2 15.2 H15.8" stroke="#000" stroke-width="1.2"/><rect x="3.6" y="3.6" width="10.8" height="4" fill="#cfcfcf"/><rect x="7.2" y="3.6" width="3.8" height="10.8" fill="#cfcfcf"/><path d="M7.2 3.6 V14.4 M11 3.6 V14.4 M3.6 7.6 H14.4" stroke="#8e8e8e" stroke-width=".8"/><path d="M11.7 11.6 L15.1 15 M15.1 11.6 L11.7 15" stroke="#7c7c7c" stroke-width="3.4" stroke-linecap="round"/><path d="M11.7 11.6 L15.1 15 M15.1 11.6 L11.7 15" stroke="#fff" stroke-width="1.9" stroke-linecap="round"/></svg></div>
<div style="left:1163px;top:813px;width:12px;height:12px;border:1px solid #a6a6a6;border-radius:2px;background:linear-gradient(#ececec,#dcdcdc)"></div>
<span class="t " style="left:1180px;top:815px;">Неправильная сумма по регистру (F7)</span>
<div class="btn" style="left:1371px;top:814px;width:56px;height:16px"><span class="t" style="left:7px;top:1px">Закрыть</span></div>
<div class="btn" style="left:1431px;top:814px;width:100px;height:16px"><svg width="16" height="16" viewBox="0 0 16 16" style="left:4px;top:0"><path d="M1.9 12.1 L9.9 4.1" stroke="#e9a83a" stroke-width="1.9" fill="none"/><path d="M9.5 4.5 L11.2 2.8" stroke="#7c8888" stroke-width="1.9" fill="none"/><path d="M11.3 2.7 L12.1 1.9" stroke="#ee1c1c" stroke-width="1.9" stroke-linecap="round" fill="none"/><path d="M1.2 12.8 L2.2 11.8" stroke="#33334a" stroke-width="1.6" fill="none"/></svg><span class="t" style="left:19px;top:1px">Редактировать</span></div>
<div class="red" style="left:17px;top:745px;width:1518px;height:25px"></div>
<div class="btn" style="left:1235px;top:842px;width:28px;height:16px"></div>
<div class="btn" style="left:1269px;top:842px;width:126px;height:16px"></div>
<div class="btn" style="left:1401px;top:842px;width:137px;height:16px"></div>
</body></html>
